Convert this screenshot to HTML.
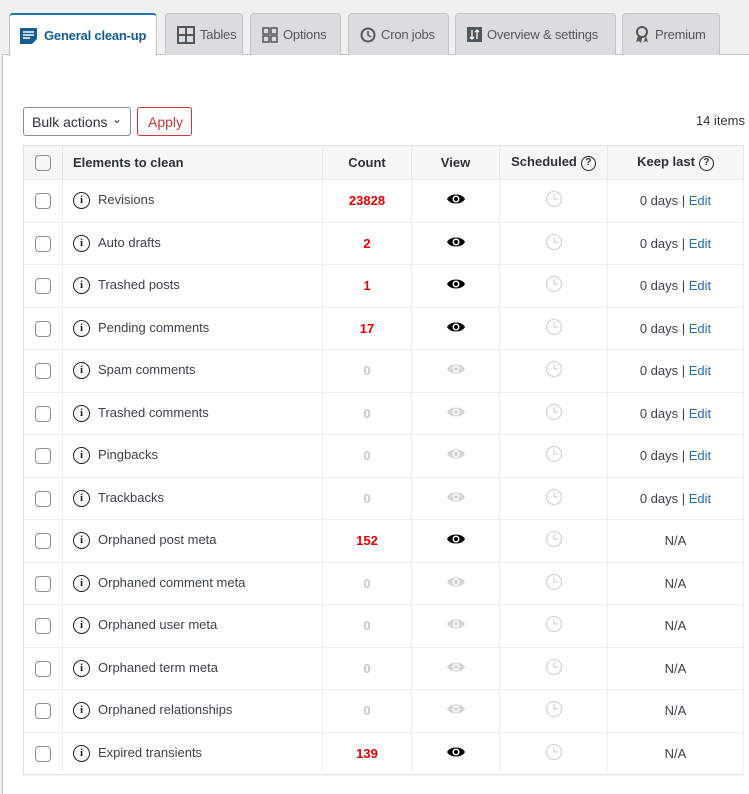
<!DOCTYPE html>
<html><head><meta charset="utf-8"><style>
*{box-sizing:border-box;margin:0;padding:0}
body{width:749px;height:787px;overflow:hidden;background:#f0f0f1;font-family:"Liberation Sans",sans-serif;font-size:13px;color:#3c434a;position:relative}
.panel{position:absolute;left:2px;top:54px;width:760px;height:740px;background:#fff;border-left:1px solid #c3c4c7;border-top:1px solid #c3c4c7}
.tab{position:absolute;top:13px;height:42px;background:#dcdcde;border:1px solid #c3c4c7;border-bottom:none;border-radius:4px 4px 0 0;font-size:13px;letter-spacing:-0.2px;white-space:nowrap;color:#50575e;display:flex;align-items:center;padding-left:11px;gap:5px}
.tab.act{background:#fff;border-top:2px solid #2271b1;color:#135e96;font-weight:bold;height:43px;z-index:2;padding-left:9px}
.sel{position:absolute;left:23px;top:107px;width:108px;height:29px;border:1px solid #8c8f94;border-radius:3px;background:#fff;font-size:14px;color:#2c3338;padding:6px 8px}
.apply{position:absolute;left:137px;top:107px;width:55px;height:29px;border:1px solid #d63638;border-radius:3px;color:#d63638;font-size:14px;padding:6px 10px}
.items{position:absolute;right:4px;top:113px;font-size:13px;color:#2c3338}
table{position:absolute;left:23px;top:145px;width:721px;border-collapse:collapse;border:1px solid #e0e0e0;box-shadow:0 1px 1px rgba(0,0,0,.05)}
th{height:34px;background:#f6f7f7;font-weight:bold;font-size:13px;color:#2c3338;border-right:1px solid #e6e6e6;text-align:center}
td{height:42.5px;border-top:1px solid #ececec;border-right:1px solid #efefef;text-align:center;font-size:13px}
td.n{text-align:left;padding-left:10px;color:#3c434a}
th.n{text-align:left;padding-left:10px}
.cb{display:inline-block;width:16px;height:16px;border:1px solid #8c8f94;border-radius:4px;vertical-align:middle}
.i{display:inline-block;width:17px;height:17px;border:1.5px solid #222;border-radius:50%;font:bold 11px "Liberation Serif",serif;text-align:center;line-height:14px;color:#222;vertical-align:middle;margin-right:8px}
.r{color:#e00;font-weight:bold}.z{color:#c8c8c8;font-weight:bold}
.q{display:inline-block;width:15px;height:15px;border:1.3px solid #222;border-radius:50%;font-size:10px;line-height:12px;margin-left:4px;vertical-align:middle;font-weight:bold}
a{color:#2271b1;text-decoration:none}
</style></head><body>
<div class="panel"></div>
<div class="tab act" style="left:9px;width:148px"><svg width="20" height="18" viewBox="0 0 20 18"><path d="M1 1h17v11l-5 5H1z" fill="#135e96"/><path d="M4 5h11M4 8h11M4 11h7" stroke="#fff" stroke-width="1.6"/></svg>General clean-up</div>
<div class="tab" style="left:165px;width:78px"><svg width="18" height="18"><rect x="1" y="1" width="16" height="16" fill="none" stroke="#50575e" stroke-width="2"/><path d="M9 1v16M1 9h16" stroke="#50575e" stroke-width="2"/></svg>Tables</div>
<div class="tab" style="left:250px;width:91px"><svg width="16" height="16"><g fill="none" stroke="#50575e" stroke-width="1.5"><rect x="1" y="1" width="6" height="6"/><rect x="9" y="1" width="6" height="6"/><rect x="1" y="9" width="6" height="6"/><rect x="9" y="9" width="6" height="6"/></g></svg>Options</div>
<div class="tab" style="left:348px;width:101px"><svg width="16" height="16"><circle cx="8" cy="8" r="6.5" fill="none" stroke="#50575e" stroke-width="2"/><path d="M8 4v4l3 2" stroke="#50575e" stroke-width="1.6" fill="none"/></svg>Cron jobs</div>
<div class="tab" style="left:455px;width:161px"><svg width="15" height="15"><rect width="15" height="15" fill="#50575e"/><path d="M5 3v9M3 10l2 2 2-2M10 12V3M8 5l2-2 2 2" stroke="#fff" stroke-width="1.3" fill="none"/></svg>Overview &amp; settings</div>
<div class="tab" style="left:622px;width:98px"><svg width="16" height="18"><circle cx="8" cy="6" r="5" fill="none" stroke="#50575e" stroke-width="2"/><path d="M4 10l-2 6 3-1 2 2 1-5M12 10l2 6-3-1-2 2" fill="#50575e"/></svg>Premium</div>
<div class="sel">Bulk actions <span style="position:absolute;right:8px;top:4px;font-size:12px">&#8964;</span></div>
<div class="apply">Apply</div>
<div class="items">14 items</div>
<table>
<tr><th style="width:39px"><span class="cb"></span></th><th class="n" style="width:260px">Elements to clean</th><th style="width:89px">Count</th><th style="width:88px">View</th><th style="width:108px">Scheduled<span class="q">?</span></th><th>Keep last<span class="q">?</span></th></tr>
</table>
<script>
const rows=[["Revisions","23828",1],["Auto drafts","2",1],["Trashed posts","1",1],["Pending comments","17",1],["Spam comments","0",1],["Trashed comments","0",1],["Pingbacks","0",1],["Trackbacks","0",1],["Orphaned post meta","152",0],["Orphaned comment meta","0",0],["Orphaned user meta","0",0],["Orphaned term meta","0",0],["Orphaned relationships","0",0],["Expired transients","139",0]];
const t=document.querySelector('table');
for(const [n,c,k] of rows){const on=c!=="0";const col=on?"#000":"#d5d5d5";
t.insertAdjacentHTML('beforeend',`<tr><td><span class="cb"></span></td><td class="n"><span class="i">i</span>${n}</td><td class="${on?'r':'z'}">${c}</td><td><svg width="20" height="14" viewBox="0 0 20 14"><path d="M1 7C4 1 16 1 19 7C16 13 4 13 1 7Z" fill="${col}"/><circle cx="10" cy="7" r="3.5" fill="#fff"/><circle cx="10" cy="7" r="2" fill="${col}"/></svg></td><td><svg width="18" height="18"><circle cx="9" cy="9" r="7.5" fill="none" stroke="#d5d5d5" stroke-width="1.3"/><path d="M9 4v5h4" stroke="#d5d5d5" stroke-width="1.3" fill="none"/></svg></td><td>${k?'0 days | <a>Edit</a>':'N/A'}</td></tr>`);}
</script>
</body></html>
